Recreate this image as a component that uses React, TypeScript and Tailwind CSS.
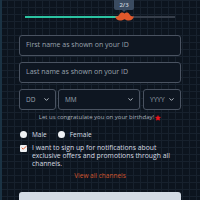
import { ChevronDown, Star, Check } from "lucide-react";

const font = { fontFamily: '"Open Sans", "Noto Sans", sans-serif' };

function Field({ placeholder }: { placeholder: string }) {
  return (
    <div className="flex h-[21px] items-center rounded-[3px] border border-[#4a5361] bg-[#0e1621] px-[6px] text-[7px] text-[#9aa3ae]">
      {placeholder}
    </div>
  );
}

function Select({ label, className }: { label: string; className: string }) {
  return (
    <div
      className={`flex h-[21px] items-center justify-between rounded-[3px] border border-[#4a5361] bg-[#0e1621] pl-[6px] pr-[5px] text-[6.5px] text-[#9aa3ae] ${className}`}
    >
      <span>{label}</span>
      <ChevronDown className="size-[7px] text-[#c7ced6]" strokeWidth={3} />
    </div>
  );
}

function Mustache() {
  return (
    <svg width="19" height="10" viewBox="0 0 19 10">
      <path
        d="M9.5 1.5 C8 -0.2 5.5 0.2 4.5 2.2 C3.6 4 2.2 4.8 0 4.2 C1 8.2 5 10 9.5 7.2 C14 10 18 8.2 19 4.2 C16.8 4.8 15.4 4 14.5 2.2 C13.5 0.2 11 -0.2 9.5 1.5 Z"
        fill="#e2582b"
      />
    </svg>
  );
}

export default function App() {
  return (
    <div
      className="relative h-[200px] w-[200px] overflow-hidden bg-[#0c141e]"
      style={{
        ...font,
        backgroundImage:
          "linear-gradient(#17212d 1px, transparent 1px), linear-gradient(90deg, #17212d 1px, transparent 1px)",
        backgroundSize: "7px 7px",
      }}
    >
      <div className="absolute inset-y-0 left-0 w-[2px] bg-[#1b3344]" />

      {/* progress */}
      <div className="relative mx-[25px] h-[24px]">
        <div className="absolute left-0 right-0 top-[16px] flex h-[2px]">
          <div className="w-[94px] bg-[#2cc3a2]" />
          <div className="flex-1 bg-[#363e4a]" />
        </div>
        <div className="absolute left-[89px] top-0 flex w-[20px] flex-col items-center">
          <div className="flex h-[10px] w-[20px] items-center justify-center rounded-b-[2px] bg-[#3a4b60] text-[6px] font-semibold text-[#c9d3de]">
            2/3
          </div>
          <div className="h-0 w-0 border-x-[2px] border-t-[2px] border-x-transparent border-t-[#3a4b60]" />
        </div>
        <div className="absolute left-[90px] top-[12px]">
          <Mustache />
        </div>
      </div>

      <div className="mx-[19px] mt-[11px] flex flex-col gap-[6px]">
        <Field placeholder="First name as shown on your ID" />
        <Field placeholder="Last name as shown on your ID" />
        <div className="flex gap-[2px]">
          <Select label="DD" className="w-[37px]" />
          <Select label="MM" className="w-[82px]" />
          <Select label="YYYY" className="ml-[1px] flex-1" />
        </div>
      </div>

      <div className="mt-[3px] flex items-center justify-center gap-[1px] text-[6px] text-[#aab2bc]">
        <span>Let us congratulate you on your birthday!</span>
        <Star className="size-[6px] fill-[#e8141b] text-[#e8141b]" />
      </div>

      <div className="mx-[20px] mt-[8px] flex items-center gap-[5px] text-[6.5px] text-[#d6dbe1]">
        <div className="flex items-center gap-[5px]">
          <div className="size-[7px] rounded-full bg-[#eef1f4]" />
          <span>Male</span>
        </div>
        <div className="ml-[6px] flex items-center gap-[5px]">
          <div className="size-[7px] rounded-full bg-[#eef1f4]" />
          <span>Female</span>
        </div>
      </div>

      <div className="mx-[20px] mt-[4px] flex gap-[5px]">
        <div className="mt-[1px] flex size-[7px] shrink-0 items-center justify-center rounded-[1px] bg-[#eef1f4]">
          <Check className="size-[6px] text-[#e2582b]" strokeWidth={4} />
        </div>
        <p className="pr-[8px] text-[6.8px] leading-[8px] text-[#d6dbe1]">
          I want to sign up for notifications about exclusive offers and promotions through all
          channels.
        </p>
      </div>

      <div className="mt-[3px] text-center text-[6.5px] text-[#d0532b]">View all channels</div>

      <div className="mx-[19px] mt-[11px] h-[24px] rounded-[3px] bg-[#d3dbe4]" />
    </div>
  );
}
